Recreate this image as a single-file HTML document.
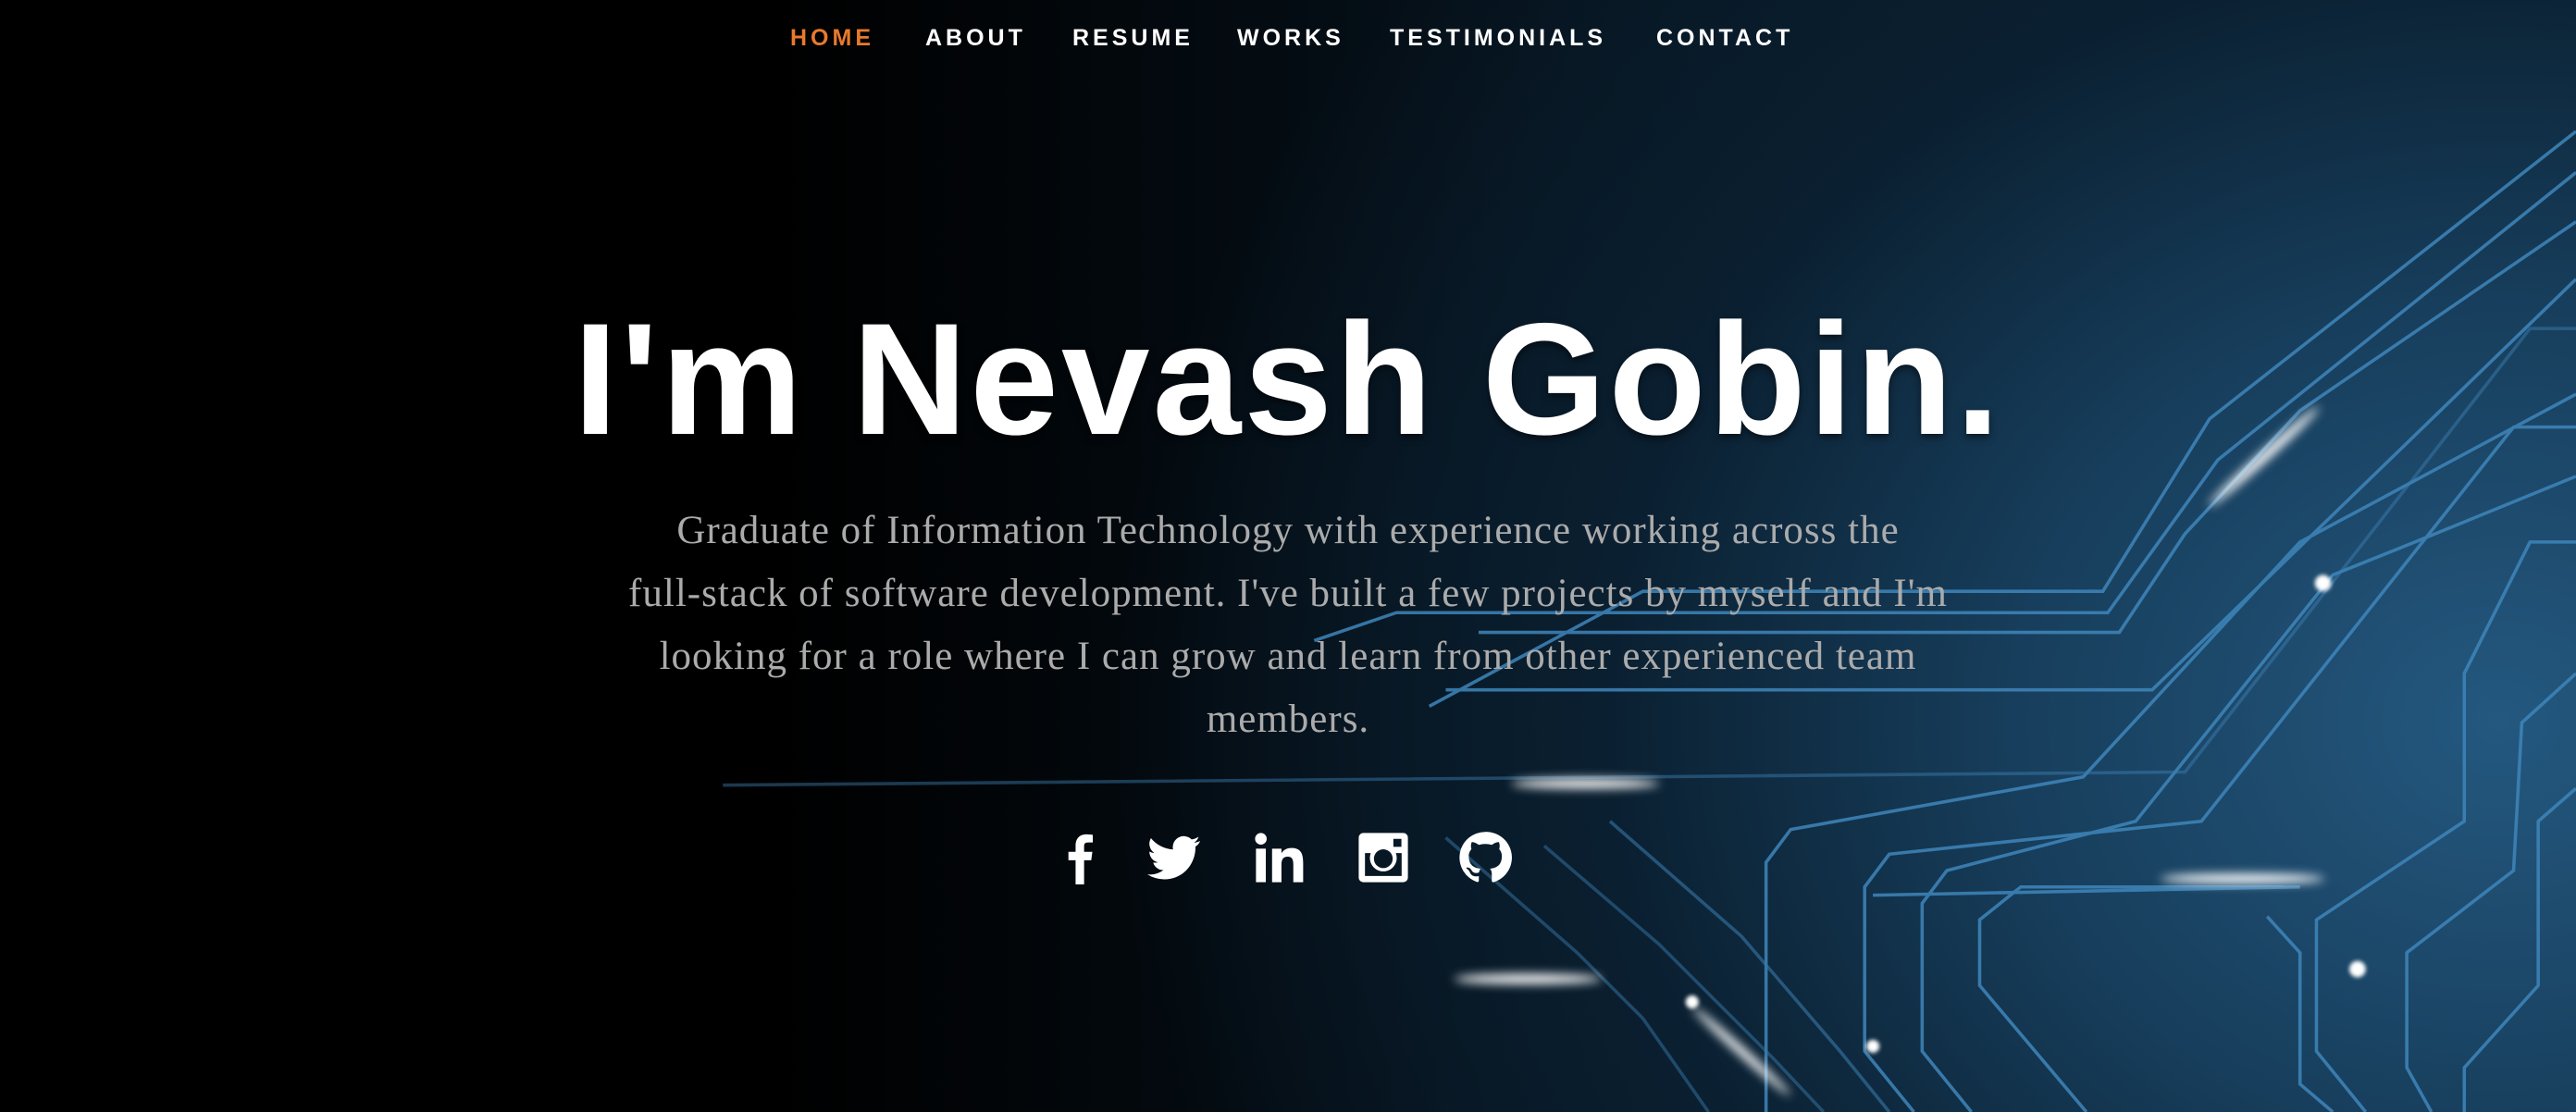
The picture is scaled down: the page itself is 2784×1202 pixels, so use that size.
<!DOCTYPE html>
<html><head><meta charset="utf-8">
<style>
html,body{margin:0;padding:0;}
body{width:2784px;height:1202px;overflow:hidden;position:relative;background:#000;font-family:"Liberation Sans",sans-serif;}
.bg{position:absolute;inset:0;background:
 radial-gradient(ellipse 1500px 1300px at 2700px 780px,#24587f 0%,#173e5c 35%,#0a1f30 65%,rgba(0,0,0,0) 100%),
 linear-gradient(90deg,#000 0%,#000 30%,#06121c 60%,#0b2234 100%);}
svg.c{position:absolute;left:0;top:0;}
.nav a{position:absolute;top:26px;font-weight:bold;font-size:25px;letter-spacing:4px;color:#fff;text-decoration:none;line-height:30px;}
h1{position:absolute;left:0;width:2784px;top:300px;margin:0;text-align:center;color:#fff;font-size:172px;font-weight:bold;letter-spacing:3px;line-height:220px;text-shadow:0 4px 8px rgba(0,0,0,.5);}
p{position:absolute;left:0;width:2784px;top:540px;margin:0;text-align:center;color:#ababab;font-family:"Liberation Serif",serif;font-size:43px;letter-spacing:1px;line-height:68px;}
.ic{position:absolute;top:898px;width:58px;height:58px;}
</style></head><body>
<div class="bg"></div>
<svg class="c" width="2784" height="1202" viewBox="0 0 1568 677" preserveAspectRatio="none">
<defs><filter id="b"><feGaussianBlur stdDeviation="3"/></filter><filter id="b2"><feGaussianBlur stdDeviation="1.2"/></filter></defs>
<g fill="none" stroke="#3f86bb" stroke-width="2" opacity="0.85">
<path d="M1568 80 L1345 255 L1280 360 L1000 360 L870 430"/>
<path d="M1568 105 L1350 280 L1283 373 L850 373 L800 390"/>
<path d="M1568 135 L1400 250 L1330 325 L1290 385 L900 385"/>
<path d="M1568 170 L1310 420 L880 420"/>
<path d="M1568 200 L1540 200 L1330 470 L440 478" opacity="0.5"/>
<path d="M1568 240 L1400 330 L1268 473 L1090 505 L1075 525 L1075 677"/>
<path d="M1568 260 L1530 260 L1340 500 L1150 520 L1135 540 L1135 640 L1165 677"/>
<path d="M1568 290 L1470 330 L1420 350 L1300 500 L1185 530 L1170 550 L1170 640 L1200 677"/>
<path d="M1568 330 L1540 330 L1500 410 L1500 500 L1410 560 L1410 640 L1440 677"/>
<path d="M1568 410 L1535 440 L1530 530 L1465 580 L1465 650 L1480 677"/>
<path d="M1568 480 L1545 500 L1545 600 L1500 650 L1500 677"/>
<path d="M1390 540 L1230 540 L1205 560 L1205 600 L1270 677"/>
<path d="M1380 558 L1400 580 L1400 660 L1420 677"/>
<path d="M1400 540 L1140 545"/>
<path d="M980 500 L1060 570 L1120 640 L1150 677" opacity="0.6"/>
<path d="M940 515 L1010 575 L1080 645 L1110 677" opacity="0.5"/>
<path d="M880 510 L960 580 L1000 620 L1040 677" opacity="0.5"/>
</g>
<g fill="#fff" filter="url(#b)">
<ellipse cx="965" cy="477" rx="45" ry="3"/>
<ellipse cx="930" cy="596" rx="45" ry="3"/>
<ellipse cx="1365" cy="535" rx="50" ry="3"/>
<ellipse cx="1378" cy="278" rx="45" ry="3" transform="rotate(-42 1378 278)"/>
<ellipse cx="1060" cy="640" rx="40" ry="2.5" transform="rotate(42 1060 640)"/>
</g>
<g fill="#fff" filter="url(#b2)">
<circle cx="1414" cy="355" r="5"/><circle cx="1435" cy="590" r="5"/><circle cx="1030" cy="610" r="4"/><circle cx="1140" cy="637" r="4"/>
</g>
</svg>
<div class="nav">
<a style="left:854px;color:#e87a2c">HOME</a>
<a style="left:1000px">ABOUT</a>
<a style="left:1159px">RESUME</a>
<a style="left:1337px">WORKS</a>
<a style="left:1502px">TESTIMONIALS</a>
<a style="left:1790px">CONTACT</a>
</div>
<h1>I'm Nevash Gobin.</h1>
<p>Graduate of Information Technology with experience working across the<br>full-stack of software development. I've built a few projects by myself and I'm<br>looking for a role where I can grow and learn from other experienced team<br>members.</p>
<svg class="ic" style="left:1139px" viewBox="0 0 24 24"><path fill="#fff" d="M13.5 24V13.2h3.2l.5-3.8h-3.7V7c0-1.1.3-1.8 1.9-1.8h2V1.8c-.4 0-1.5-.2-2.9-.2-2.9 0-4.8 1.8-4.8 5v2.8H6.5v3.8h3.2V24z"/></svg>
<svg class="ic" style="left:1240px" viewBox="0 0 24 24"><path fill="#fff" d="M23.6 4.6c-.9.4-1.8.6-2.8.8 1-.6 1.8-1.6 2.1-2.7-.9.6-2 1-3.1 1.2A4.9 4.9 0 0 0 11.5 8.4 13.9 13.9 0 0 1 1.6 3.3a4.9 4.9 0 0 0 1.5 6.6c-.8 0-1.6-.3-2.2-.6 0 2.4 1.7 4.4 3.9 4.8-.7.2-1.5.2-2.2.1.6 2 2.4 3.4 4.6 3.4A9.9 9.9 0 0 1 0 19.5 14 14 0 0 0 7.5 21.7c9.1 0 14-7.5 14-14v-.6c1-.7 1.8-1.6 2.1-2.5z"/></svg>
<svg class="ic" style="left:1354px" viewBox="0 0 24 24"><g fill="#fff"><circle cx="3.6" cy="3.6" r="2.6"/><rect x="1.4" y="8" width="4.4" height="15"/><path d="M8.6 8h4.2v2.1c.6-1.1 2-2.4 4.4-2.4 4.5 0 5.3 2.9 5.3 6.8V23h-4.4v-7.4c0-1.8 0-4-2.5-4s-2.8 1.9-2.8 3.9V23H8.6z"/></g></svg>
<svg class="ic" style="left:1466px" viewBox="0 0 24 24"><path fill="#fff" fill-rule="evenodd" d="M3 1h18a2 2 0 0 1 2 2v18a2 2 0 0 1-2 2H3a2 2 0 0 1-2-2V3a2 2 0 0 1 2-2zm.8 9v10.2h16.4V10h-2.6a6 6 0 1 1-11.2 0zM12 8.3a4.2 4.2 0 1 0 0 8.4 4.2 4.2 0 0 0 0-8.4zM16.5 3.6v3.6h3.6V3.6z"/></svg>
<svg class="ic" style="left:1576px" viewBox="0 0 24 24"><path fill="#fff" d="M12 .5a11.5 11.5 0 0 0-3.6 22.4c.6.1.8-.2.8-.6v-2c-3.2.7-3.9-1.5-3.9-1.5-.5-1.3-1.3-1.7-1.3-1.7-1-.7.1-.7.1-.7 1.2.1 1.8 1.2 1.8 1.2 1 1.8 2.7 1.3 3.4 1 .1-.8.4-1.3.7-1.6-2.6-.3-5.3-1.3-5.3-5.7 0-1.3.5-2.3 1.2-3.1-.1-.3-.5-1.5.1-3.1 0 0 1-.3 3.2 1.2a11 11 0 0 1 5.8 0c2.2-1.5 3.2-1.2 3.2-1.2.6 1.6.2 2.8.1 3.1.7.8 1.2 1.8 1.2 3.1 0 4.4-2.7 5.4-5.3 5.7.4.4.8 1.1.8 2.2v3.2c0 .3.2.7.8.6A11.5 11.5 0 0 0 12 .5z"/></svg>
</body></html>
